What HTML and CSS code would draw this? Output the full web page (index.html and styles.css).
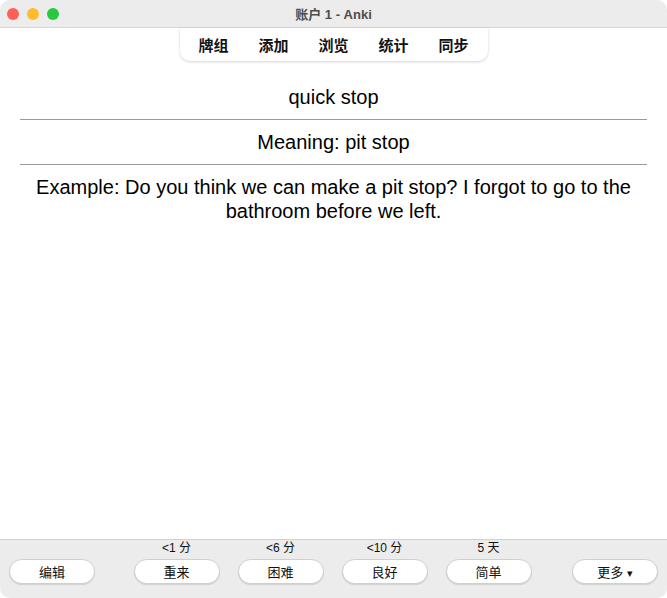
FILE: index.html
```html
<!DOCTYPE html>
<html lang="zh">
<head>
    <meta charset="UTF-8">
    <title>账户 1 - Anki</title>
    <link rel="stylesheet" href="styles.css">
</head>
<body>

    <div class="window">
        <div class="titlebar">
            <div class="lights">
                <span class="light red"></span>
                <span class="light yellow"></span>
                <span class="light green"></span>
            </div>
            <div class="title">账户 1 - Anki</div>
            <div></div>
        </div>

        <div class="toolbar">
            <a>牌组</a>
            <a>添加</a>
            <a>浏览</a>
            <a>统计</a>
            <a>同步</a>
        </div>

        <div class="card">
            <div class="field">quick stop</div>
            <hr>
            <div class="field">Meaning: pit stop</div>
            <hr>
            <div class="field">Example: Do you think we can make a pit stop? I forgot to go to the bathroom before we left.</div>
        </div>

        <div class="bottombar">
            <div class="slot">
                <span class="due"></span>
                <button>编辑</button>
            </div>
            <div class="answers">
                <div class="slot">
                    <span class="due">&lt;1 分</span>
                    <button>重来</button>
                </div>
                <div class="slot">
                    <span class="due">&lt;6 分</span>
                    <button>困难</button>
                </div>
                <div class="slot">
                    <span class="due">&lt;10 分</span>
                    <button>良好</button>
                </div>
                <div class="slot">
                    <span class="due">5 天</span>
                    <button>简单</button>
                </div>
            </div>
            <div class="slot">
                <span class="due"></span>
                <button>更多 <span class="caret">&#9662;</span></button>
            </div>
        </div>
    </div>

</body>
</html>
```

FILE: styles.css
```css
html, body {
    margin: 0;
    height: 100%;
    background-color: #fff;
}

body {
    font-family: "Liberation Sans", "Noto Sans CJK SC", Arial, sans-serif;
}

.window {
    height: 598px;
    display: flex;
    flex-direction: column;
    background-color: #fff;
    border-radius: 10px;
    overflow: hidden;
}

/* window chrome */
.titlebar {
    height: 28px;
    flex-shrink: 0;
    display: grid;
    grid-template-columns: 1fr auto 1fr;
    align-items: center;
    background-color: #ececec;
    border-bottom: 1px solid #d6d6d6;
    box-sizing: border-box;
}

.lights {
    display: flex;
    gap: 8px;
    padding-left: 7px;
    padding-top: 1px;
}

.light {
    width: 12px;
    height: 12px;
    border-radius: 50%;
}

.red { background-color: #fe5f57; }
.yellow { background-color: #febc2e; }
.green { background-color: #28c840; }

.title {
    font-size: 13px;
    font-weight: bold;
    color: #4d4d4d;
}

/* top toolbar */
.toolbar {
    align-self: center;
    display: flex;
    padding: 0 4px;
    height: 33px;
    align-items: center;
    background-color: #fff;
    border-radius: 0 0 10px 10px;
    box-shadow: 0 1px 3px rgba(0, 0, 0, 0.18);
}

.toolbar a {
    width: 60px;
    text-align: center;
    font-size: 15px;
    font-weight: bold;
    color: #111;
}

/* card */
.card {
    flex: 1;
    padding: 24px 20px 0;
    text-align: center;
    font-size: 20px;
    line-height: 24px;
    color: #000;
}

.card hr {
    margin: 10px 0 10px;
    border: none;
    border-top: 1px solid #9a9a9a;
    height: 0;
}

/* answer bar */
.bottombar {
    height: 59px;
    flex-shrink: 0;
    box-sizing: border-box;
    display: flex;
    justify-content: space-between;
    align-items: flex-end;
    padding: 0 9px 14px;
    background-color: #ececec;
    border-top: 1px solid #d0d0d0;
}

.answers {
    display: flex;
    gap: 18px;
    margin-right: 2px;
}

.slot {
    display: flex;
    flex-direction: column;
    align-items: center;
}

.due {
    height: 16px;
    font-size: 12px;
    line-height: 16px;
    color: #111;
    margin-bottom: 3px;
}

button {
    width: 86px;
    height: 25px;
    font-family: inherit;
    font-size: 13px;
    color: #111;
    background-color: #fff;
    border: 1px solid #cfcfcf;
    border-radius: 13px;
    box-shadow: 0 1px 1px rgba(0, 0, 0, 0.12);
    padding: 0;
}

.caret {
    font-size: 11px;
}
```
